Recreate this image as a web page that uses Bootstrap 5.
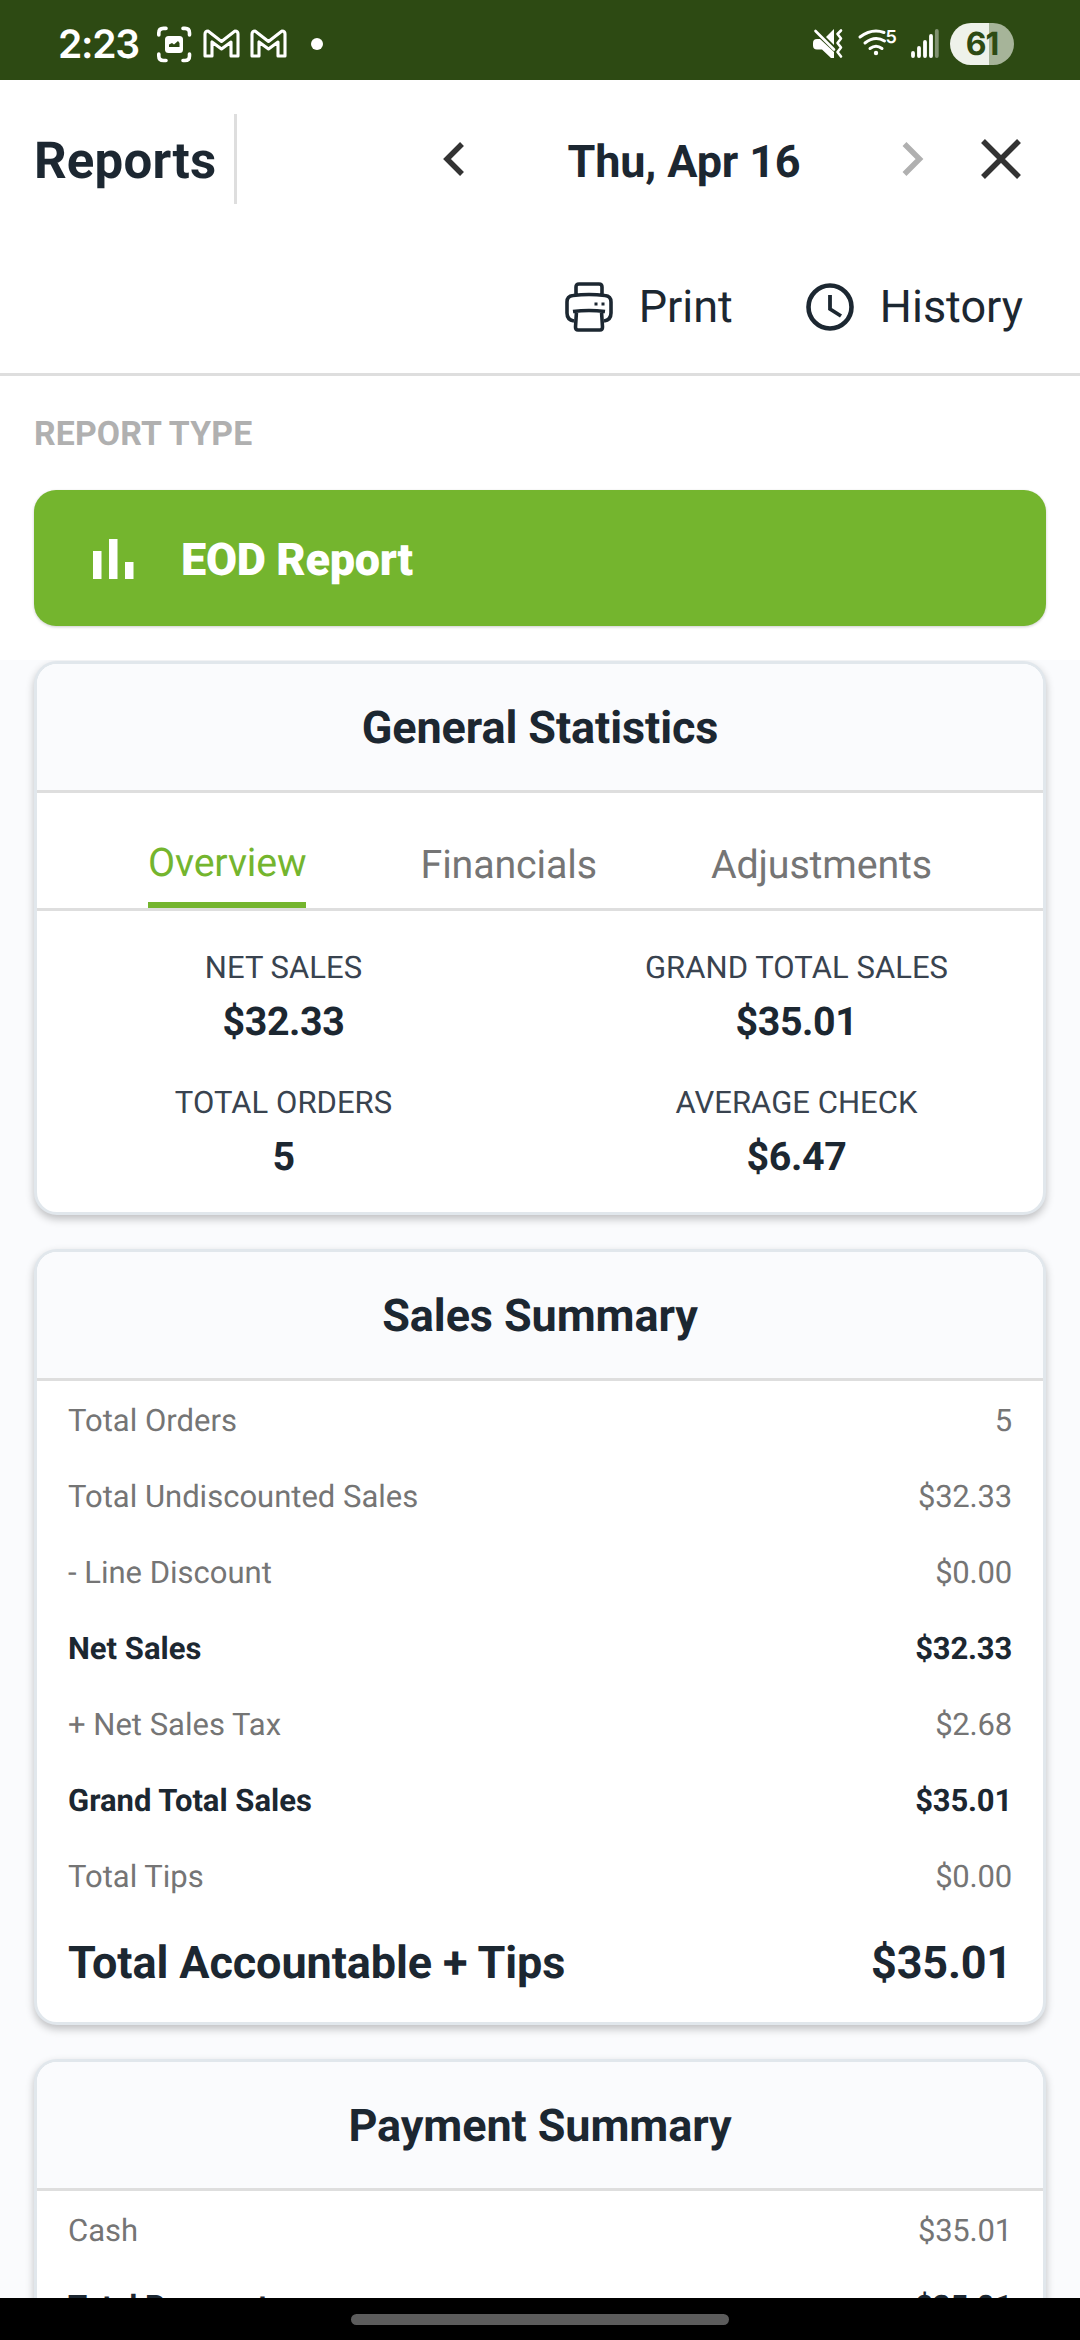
<!DOCTYPE html>
<html lang="en">
<head>
<meta charset="utf-8">
<meta name="viewport" content="width=device-width, initial-scale=1">
<title>Reports</title>
<link href="https://cdn.jsdelivr.net/npm/bootstrap@5.3.0/dist/css/bootstrap.min.css" rel="stylesheet">
<style>
:root{--ink:#1c2731;--muted:#757575;--brand:#74b52e;--rule:#dedede}
body{font-family:Roboto,"Noto Sans",sans-serif;color:var(--ink);background:#fafbfd;width:1080px;height:2340px;overflow:hidden;text-rendering:geometricPrecision}
svg{display:block;flex:none;overflow:visible}
.status-bar{height:80px;background:#2d4a13;color:#fff;padding:8px 66px 0 58px;font-family:Inter,Roboto,sans-serif}
.clock-text{font-size:39px;font-weight:600;line-height:1;width:99px;letter-spacing:-1.3px}
.battery{width:64px;height:42px;border-radius:21px;background:linear-gradient(90deg,#eef2ea 0 39px,#a6b499 39px);color:#2d4a13;font-size:32px;font-weight:700;line-height:42px;letter-spacing:-1px}
.top-area{height:296px;border-bottom:3px solid var(--rule)}
.title-row{height:90px;margin-top:34px;padding:0 59px 0 34px}
.page-title{font-size:51px;line-height:90px;width:200px;padding-top:6px;letter-spacing:.2px}
.v-rule{width:3px;background:var(--rule)}
.date-text{font-size:45px;line-height:94px;width:438px;padding-top:5px;letter-spacing:-.15px}
.action-row{height:92px;margin-top:57px;padding-right:57px;font-size:45px;line-height:94px}
.type-area{height:284px;padding:0 34px}
.type-label{font-size:33.75px;line-height:40px;padding-top:39px;color:#b0b0b0;letter-spacing:.15px}
.type-btn{height:136px;margin-top:35px;border-radius:22px;background:var(--brand);box-shadow:0 1px 3px rgba(0,0,0,.2);padding:2px 0 0 59px}
.type-name{font-size:45px;font-weight:900;margin-left:47px;letter-spacing:-.3px;padding-top:2px}
.scroll-area{height:1638px;overflow:hidden;padding:1px 34px 0}
.panel{border:3px solid #e1e7ec;border-radius:23px;background:#fff;box-shadow:0 4px 9px rgba(0,0,0,.24);margin-bottom:34px;overflow:hidden}
.panel-title{height:129px;background:#fafbfd;border-bottom:3px solid var(--rule);font-size:45px;line-height:127px;letter-spacing:-.1px}
.tab-row{height:118px;border-bottom:3px solid var(--rule);font-size:39.4px;color:var(--muted);padding:0 111px 0 111px;letter-spacing:-.15px}
.tab-item{height:115px;line-height:143px}
.tab-item.current{color:var(--brand);line-height:139px;border-bottom:6px solid var(--brand)}
.stat-area{height:301px;padding-top:36px;margin:0 -10px}
.stat-box{height:135px}
.stat-label{font-size:31px;line-height:42px;color:#39434f;letter-spacing:.05px}
.stat-value{font-size:39.4px;line-height:66px;letter-spacing:-.4px}
.line-row{font-size:31px;line-height:79px;height:76px;color:var(--muted);padding:0 31px 0 31px}
.line-row span:last-child{letter-spacing:-.2px}
.line-row.strong-row{font-weight:700;color:var(--ink)}
.line-row.total-row{font-weight:700;color:var(--ink);font-size:45px;height:109px;line-height:100px;letter-spacing:-.1px}
.nav-strip{height:42px;background:#000;padding-top:16px}
.nav-pill{width:378px;height:11px;border-radius:6px;background:#5c5c5c}
.gap-dot{margin-left:24px}
.gap-wifi{margin-left:15px}
.gap-signal{margin-left:13px}
.gap-battery{margin-left:11px}
.gap-prev{margin-left:206px}
.gap-label{margin-left:26px}
.gap-action{margin-left:73px}
</style>
</head>
<body>
<div class="status-bar d-flex align-items-center">
  <div class="clock-text">2:23</div>
  <svg width="34" height="36" viewBox="0 0 34 36" fill="none" stroke="#fff" stroke-width="3.600" stroke-linecap="round"><path d="M1.800 9V7Q1.800 2.400 6.500 2.400H9M26 2.400h2Q32.500 2.400 32.500 7v2M1.800 28v2Q1.800 34.500 6.500 34.500H9M26 34.500h2Q32.500 34.500 32.500 30v-2"/><rect x="8" y="10" width="18" height="17" rx="3.500" fill="#fff" stroke="none"/><path d="M12 21v-2.500l3-1.500 2 1.500 4-3.500 1.500 2V21z" fill="#2d4a13" stroke="none"/></svg>
  <svg class="ms-2 ps-1" width="43" height="30" viewBox="0 0 39 30" fill="none" stroke="#fff" stroke-width="3.100" stroke-linejoin="round"><path d="M2 27V5Q2 2 5 2L18.500 12.500 32 2Q35 2 35 5V27H28V13L18.500 20 9 13V27Z"/></svg>
  <svg class="ps-2" width="45" height="30" viewBox="0 0 37 30" fill="none" stroke="#fff" stroke-width="3.100" stroke-linejoin="round"><path d="M2 27V5Q2 2 5 2L18.500 12.500 32 2Q35 2 35 5V27H28V13L18.500 20 9 13V27Z"/></svg>
  <svg class="gap-dot" width="12" height="12" viewBox="0 0 12 12"><circle cx="6" cy="6" r="6" fill="#fff"/></svg>
  <svg class="ms-auto" width="30" height="30" viewBox="0 0 30 30"><path d="M0 14Q0 10 4 10H7L21 23V29H18L9 20.500H4Q0 20.500 0 16.500Z M13 8L21 0V16Z" fill="#fff"/><path d="M2.500 2L21 20.500" stroke="#fff" stroke-width="2.600" stroke-linecap="round"/><path d="M28 1.500L24.500 5 28 9.500 24.500 14 28 18.500 24.500 23 28 27.500" fill="none" stroke="#fff" stroke-width="2.600" stroke-linecap="round" stroke-linejoin="round"/></svg>
  <svg class="gap-wifi" width="40" height="30" viewBox="0 0 40 30" fill="none" stroke="#fff" stroke-width="3" stroke-linecap="round"><path d="M2 8Q14-1 26 3.500M7 14Q17 6 26.500 12M12 19.500Q18 15 24 19.500"/><circle cx="18" cy="24" r="2.200" fill="#fff" stroke="none"/><text x="27.500" y="14" font-size="18" font-weight="600" fill="#fff" stroke="none">5</text></svg>
  <svg class="gap-signal" width="28" height="30" viewBox="0 0 28 30" stroke="#fff" stroke-width="3.800" stroke-linecap="round"><path d="M2 24v3M8 19v8M14 13v14M20 7v20"/><path d="M25.800 2v25" opacity=".4"/></svg>
  <div class="battery gap-battery text-center">61</div>
</div>

<header class="top-area bg-white overflow-hidden">
  <div class="title-row d-flex align-items-center">
    <div class="page-title fw-bold">Reports</div>
    <div class="v-rule align-self-stretch"></div>
    <svg class="gap-prev" width="22" height="34" viewBox="0 0 22 34" fill="none" stroke="#333" stroke-width="5.500"><path d="M19 2L4 17 19 32"/></svg>
    <div class="date-text fw-bold text-center">Thu, Apr 16</div>
    <svg width="22" height="34" viewBox="0 0 22 34" fill="none" stroke="#b0b0b0" stroke-width="5.500"><path d="M1.500 2L16.500 17 1.500 32"/></svg>
    <svg class="ms-auto" width="40" height="40" viewBox="0 0 40 40" stroke="#333" stroke-width="5.500"><path d="M2 2L38 38M38 2L2 38"/></svg>
  </div>
  <div class="action-row d-flex align-items-center justify-content-end">
    <svg width="48" height="50" viewBox="0 0 48 50" fill="none" stroke="#1c2731" stroke-width="3.600" stroke-linejoin="round"><path d="M11 13V5Q11 2 14 2H34Q37 2 37 5V13M9 39Q2 38 2 31V20Q2 14 8 13.500Q24 11.500 40 13.500Q46 14 46 20V31Q46 38 39 39"/><path d="M8 29.500Q24 27.500 40 29.500M11.500 29.500L10.500 45Q10.500 48 13 48H35Q37.500 48 37.500 45L36.500 29.500"/><path d="M31 20.500v3M38 20.500v3" stroke-width="3"/></svg>
    <span class="gap-label">Print</span>
    <svg class="gap-action" width="48" height="48" viewBox="0 0 48 48" fill="none" stroke="#1c2731"><circle cx="24" cy="24" r="21.500" stroke-width="4.600"/><path d="M24 12V26L35 33" stroke-width="3.800"/></svg>
    <span class="gap-label">History</span>
  </div>
</header>

<section class="type-area bg-white">
  <div class="type-label fw-bold">REPORT TYPE</div>
  <div class="type-btn d-flex align-items-center text-white">
    <svg width="41" height="40" viewBox="0 0 41 40" fill="#fff"><path d="M0 12h8.500v28H0zM16 0h8.500v40H16zM32 23h8.500v17H32z"/></svg>
    <span class="type-name">EOD Report</span>
  </div>
</section>

<main class="scroll-area">
  <section class="panel">
    <div class="panel-title fw-bold text-center">General Statistics</div>
    <div class="tab-row d-flex justify-content-between">
      <div class="tab-item current">Overview</div>
      <div class="tab-item">Financials</div>
      <div class="tab-item">Adjustments</div>
    </div>
    <div class="stat-area row g-0 text-center align-content-start">
      <div class="col-6 stat-box"><div class="stat-label">NET SALES</div><div class="stat-value fw-bold">$32.33</div></div>
      <div class="col-6 stat-box"><div class="stat-label">GRAND TOTAL SALES</div><div class="stat-value fw-bold">$35.01</div></div>
      <div class="col-6 stat-box"><div class="stat-label">TOTAL ORDERS</div><div class="stat-value fw-bold">5</div></div>
      <div class="col-6 stat-box"><div class="stat-label">AVERAGE CHECK</div><div class="stat-value fw-bold">$6.47</div></div>
    </div>
  </section>

  <section class="panel">
    <div class="panel-title fw-bold text-center">Sales Summary</div>
    <div class="line-row d-flex justify-content-between"><span>Total Orders</span><span>5</span></div>
    <div class="line-row d-flex justify-content-between"><span>Total Undiscounted Sales</span><span>$32.33</span></div>
    <div class="line-row d-flex justify-content-between"><span>- Line Discount</span><span>$0.00</span></div>
    <div class="line-row strong-row d-flex justify-content-between"><span>Net Sales</span><span>$32.33</span></div>
    <div class="line-row d-flex justify-content-between"><span>+ Net Sales Tax</span><span>$2.68</span></div>
    <div class="line-row strong-row d-flex justify-content-between"><span>Grand Total Sales</span><span>$35.01</span></div>
    <div class="line-row d-flex justify-content-between"><span>Total Tips</span><span>$0.00</span></div>
    <div class="line-row total-row d-flex justify-content-between"><span>Total Accountable + Tips</span><span>$35.01</span></div>
  </section>

  <section class="panel">
    <div class="panel-title fw-bold text-center">Payment Summary</div>
    <div class="line-row d-flex justify-content-between"><span>Cash</span><span>$35.01</span></div>
    <div class="line-row strong-row d-flex justify-content-between"><span>Total Payments</span><span>$35.01</span></div>
  </section>
</main>

<div class="nav-strip"><div class="nav-pill mx-auto"></div></div>
<script src="https://cdn.jsdelivr.net/npm/bootstrap@5.3.0/dist/js/bootstrap.bundle.min.js"></script>
</body>
</html>
